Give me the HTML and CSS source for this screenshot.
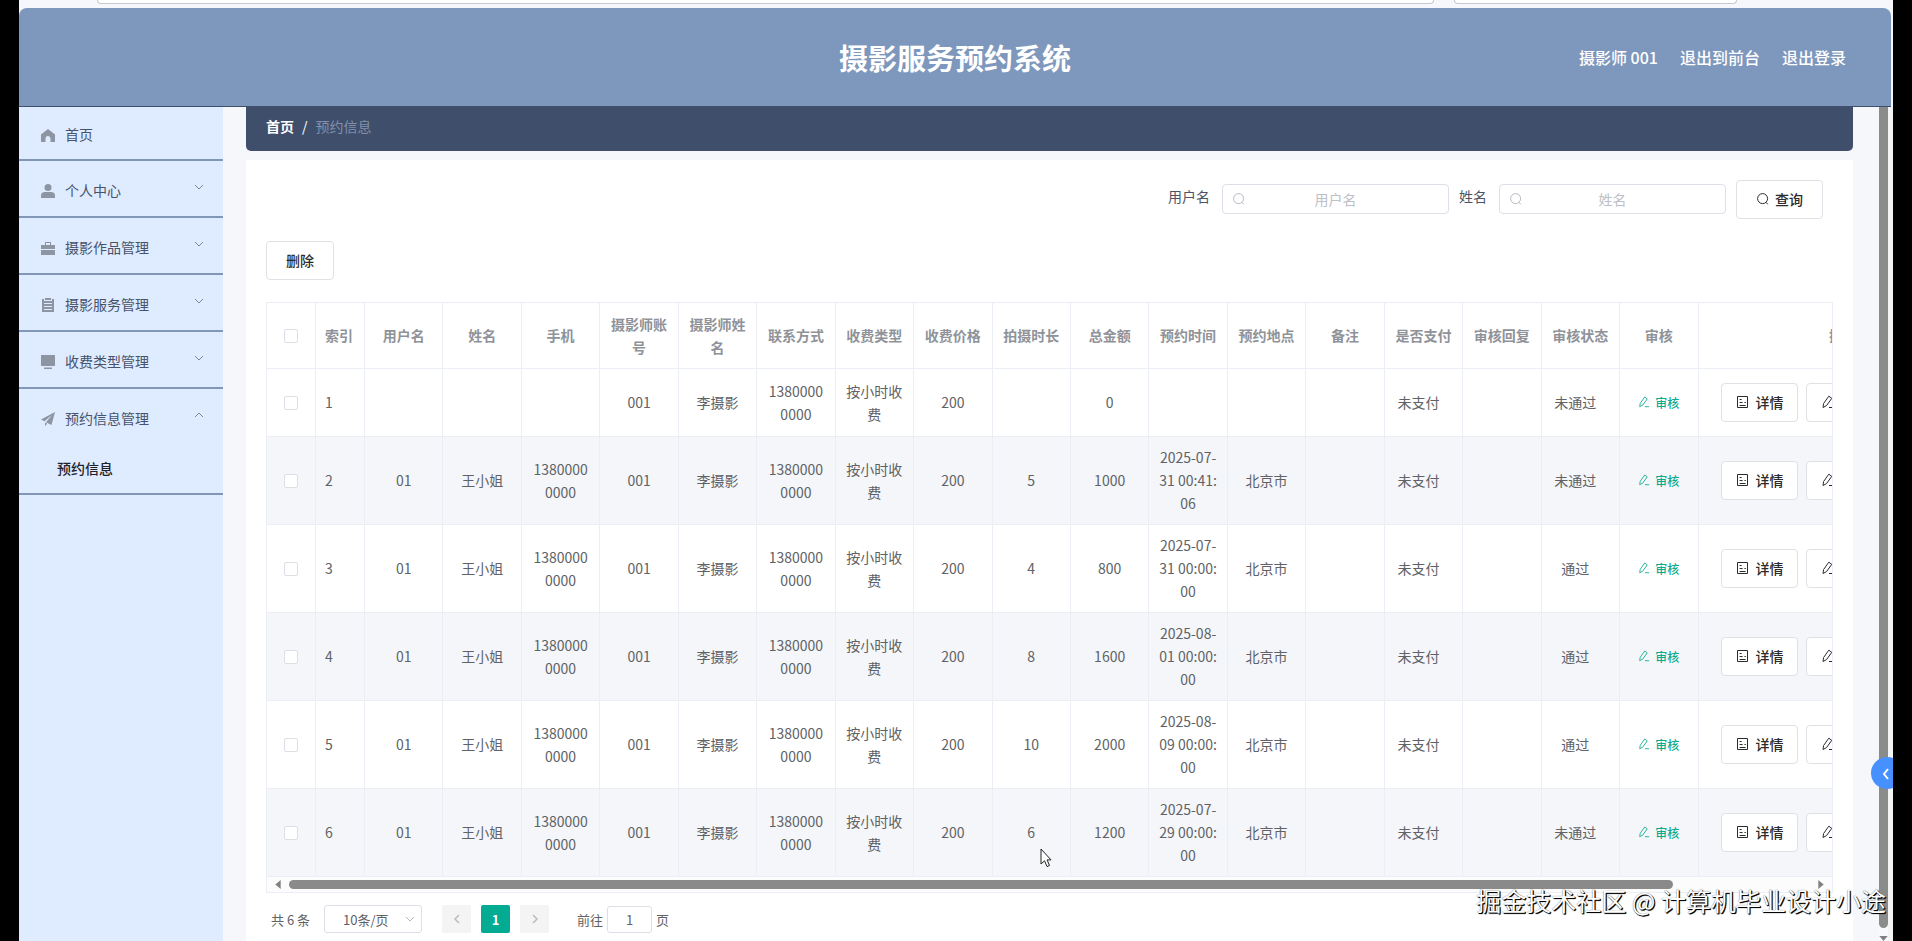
FILE: index.html
```html
<!DOCTYPE html>
<html lang="zh-CN">
<head>
  <meta charset="UTF-8" />
  <meta name="viewport" content="width=device-width, initial-scale=1.0"/>
  <title>摄影服务预约系统</title>
  <link rel="stylesheet" href="styles.css">
</head>
<body>
  <svg class="sprite" aria-hidden="true">
    <symbol id="i-search" viewBox="0 0 14 14"><circle cx="6.6" cy="6.6" r="5" fill="none" stroke="currentColor"/><path d="M10 10.3l1.8 2" fill="none" stroke="currentColor"/></symbol>
    <symbol id="i-down" viewBox="0 0 12 12"><path d="M2 4l4 4 4-4" fill="none" stroke="currentColor"/></symbol>
    <symbol id="i-up" viewBox="0 0 12 12"><path d="M2 8l4-4 4 4" fill="none" stroke="currentColor"/></symbol>
    <symbol id="i-left" viewBox="0 0 12 12"><path d="M8 2L4 6l4 4" fill="none" stroke="currentColor" stroke-width="1.5"/></symbol>
    <symbol id="i-right" viewBox="0 0 12 12"><path d="M4 2l4 4-4 4" fill="none" stroke="currentColor" stroke-width="1.5"/></symbol>
    <symbol id="i-doc" viewBox="0 0 14 14"><path d="M1.5 1.5h10v11h-10zM3.6 4.500h2M3.6 7.500h3M3.6 10.500h6M8.500 7.500h1.400" fill="none" stroke="currentColor"/></symbol>
    <symbol id="i-edit" viewBox="0 0 14 14"><path d="M2 12.500l.6-4L7.800 1.200l3 2.100-5.300 7.300zM8 12.500h5" fill="none" stroke="currentColor" stroke-linejoin="round"/></symbol>
  </svg>

  <div class="screen">
    <div class="browser-bar"><span class="pill pill-long"></span><span class="pill"></span></div>

    <header class="header">
      <h1>摄影服务预约系统</h1>
      <nav class="header-links">
        <a href="#">摄影师 001</a>
        <a href="#">退出到前台</a>
        <a href="#">退出登录</a>
      </nav>
    </header>

    <div class="body">
      <aside class="sidebar">
        <a class="menu-item first" href="#">
          <svg class="icon" viewBox="0 0 14 14"><path d="M7 1l7 5.500V14H9.500v-3.500a2.500 2.500 0 0 0-5 0V14H0V6.500z"/></svg>
          <span>首页</span>
        </a>
        <a class="menu-item" href="#">
          <svg class="icon" viewBox="0 0 14 14"><circle cx="7" cy="3.500" r="3.500"/><path d="M0 14v-2a4 4 0 0 1 4-4h6a4 4 0 0 1 4 4v2z"/></svg>
          <span>个人中心</span>
          <svg class="arrow"><use href="#i-down"/></svg>
        </a>
        <a class="menu-item" href="#">
          <svg class="icon" viewBox="0 0 14 14"><path d="M4 4V1h6v3h4v4H0V4zm1 0h4V2H5zM0 9h14v5H0z" fill-rule="evenodd"/></svg>
          <span>摄影作品管理</span>
          <svg class="arrow"><use href="#i-down"/></svg>
        </a>
        <a class="menu-item" href="#">
          <svg class="icon" viewBox="0 0 14 14"><path d="M1 1h2v2h8V1h2v13H1zM4 0h6v2H4zM3 5v1h8V5zm0 3v1h8V8zm0 3v1h8v-1z" fill-rule="evenodd"/></svg>
          <span>摄影服务管理</span>
          <svg class="arrow"><use href="#i-down"/></svg>
        </a>
        <a class="menu-item" href="#">
          <svg class="icon" viewBox="0 0 14 14"><path d="M0 0h14v11H0zM3 12.500h8V14H3z"/></svg>
          <span>收费类型管理</span>
          <svg class="arrow"><use href="#i-down"/></svg>
        </a>
        <div class="menu-group">
          <a class="menu-item" href="#">
            <svg class="icon" viewBox="0 0 14 14"><path d="M14 0L0 7.500l3.500 1.800L11 3 5 10.200l5.500 2.800zM4 10.500V14l2.200-2.300z"/></svg>
            <span>预约信息管理</span>
            <svg class="arrow"><use href="#i-up"/></svg>
          </a>
          <a class="sub-item" href="#">预约信息</a>
        </div>
      </aside>

      <main class="main">
        <nav class="breadcrumb">
          <a href="#">首页</a>
          <span class="slash">/</span>
          <span class="current">预约信息</span>
        </nav>

        <section class="card">
          <form class="search-form">
            <label for="username">用户名</label>
            <div class="search-box">
              <svg class="search-icon"><use href="#i-search"/></svg>
              <input type="text" id="username" placeholder="用户名" />
            </div>
            <label for="realname">姓名</label>
            <div class="search-box">
              <svg class="search-icon"><use href="#i-search"/></svg>
              <input type="text" id="realname" placeholder="姓名" />
            </div>
            <button type="button" class="btn"><svg class="btn-icon"><use href="#i-search"/></svg>查询</button>
          </form>

          <button type="button" class="btn btn-delete">删除</button>

          <div class="table-wrap">
            <table class="table">
              <colgroup>
                <col class="col-small"><col class="col-small">
                <col span="17">
                <col class="col-actions">
              </colgroup>
              <thead>
                <tr>
                  <th><input type="checkbox" aria-label="全选" /></th>
                  <th class="index">索引</th><th>用户名</th><th>姓名</th><th>手机</th>
                  <th>摄影师账号</th><th>摄影师姓名</th><th>联系方式</th><th>收费类型</th><th>收费价格</th>
                  <th>拍摄时长</th><th>总金额</th><th>预约时间</th><th>预约地点</th><th>备注</th>
                  <th>是否支付</th><th>审核回复</th><th>审核状态</th><th>审核</th><th>操作</th>
                </tr>
              </thead>
              <tbody>
                <tr>
                  <td><input type="checkbox" aria-label="1" /></td>
                  <td class="index">1</td><td></td><td></td><td></td>
                  <td>001</td><td>李摄影</td><td>13800000000</td><td>按小时收费</td><td>200</td>
                  <td></td><td>0</td><td></td><td></td><td></td>
                  <td class="state">未支付</td><td></td><td class="state">未通过</td>
                  <td><button type="button" class="btn-text"><svg><use href="#i-edit"/></svg>审核</button></td>
                  <td class="actions"><div class="action-row"><button type="button" class="btn"><svg class="btn-icon"><use href="#i-doc"/></svg>详情</button><button type="button" class="btn"><svg class="btn-icon"><use href="#i-edit"/></svg>修改</button></div></td>
                </tr>
                <tr>
                  <td><input type="checkbox" aria-label="2" /></td>
                  <td class="index">2</td><td>01</td><td>王小姐</td><td>13800000000</td>
                  <td>001</td><td>李摄影</td><td>13800000000</td><td>按小时收费</td><td>200</td>
                  <td>5</td><td>1000</td><td>2025-07-31 00:41:06</td><td>北京市</td><td></td>
                  <td class="state">未支付</td><td></td><td class="state">未通过</td>
                  <td><button type="button" class="btn-text"><svg><use href="#i-edit"/></svg>审核</button></td>
                  <td class="actions"><div class="action-row"><button type="button" class="btn"><svg class="btn-icon"><use href="#i-doc"/></svg>详情</button><button type="button" class="btn"><svg class="btn-icon"><use href="#i-edit"/></svg>修改</button></div></td>
                </tr>
                <tr>
                  <td><input type="checkbox" aria-label="3" /></td>
                  <td class="index">3</td><td>01</td><td>王小姐</td><td>13800000000</td>
                  <td>001</td><td>李摄影</td><td>13800000000</td><td>按小时收费</td><td>200</td>
                  <td>4</td><td>800</td><td>2025-07-31 00:00:00</td><td>北京市</td><td></td>
                  <td class="state">未支付</td><td></td><td class="state">通过</td>
                  <td><button type="button" class="btn-text"><svg><use href="#i-edit"/></svg>审核</button></td>
                  <td class="actions"><div class="action-row"><button type="button" class="btn"><svg class="btn-icon"><use href="#i-doc"/></svg>详情</button><button type="button" class="btn"><svg class="btn-icon"><use href="#i-edit"/></svg>修改</button></div></td>
                </tr>
                <tr>
                  <td><input type="checkbox" aria-label="4" /></td>
                  <td class="index">4</td><td>01</td><td>王小姐</td><td>13800000000</td>
                  <td>001</td><td>李摄影</td><td>13800000000</td><td>按小时收费</td><td>200</td>
                  <td>8</td><td>1600</td><td>2025-08-01 00:00:00</td><td>北京市</td><td></td>
                  <td class="state">未支付</td><td></td><td class="state">通过</td>
                  <td><button type="button" class="btn-text"><svg><use href="#i-edit"/></svg>审核</button></td>
                  <td class="actions"><div class="action-row"><button type="button" class="btn"><svg class="btn-icon"><use href="#i-doc"/></svg>详情</button><button type="button" class="btn"><svg class="btn-icon"><use href="#i-edit"/></svg>修改</button></div></td>
                </tr>
                <tr>
                  <td><input type="checkbox" aria-label="5" /></td>
                  <td class="index">5</td><td>01</td><td>王小姐</td><td>13800000000</td>
                  <td>001</td><td>李摄影</td><td>13800000000</td><td>按小时收费</td><td>200</td>
                  <td>10</td><td>2000</td><td>2025-08-09 00:00:00</td><td>北京市</td><td></td>
                  <td class="state">未支付</td><td></td><td class="state">通过</td>
                  <td><button type="button" class="btn-text"><svg><use href="#i-edit"/></svg>审核</button></td>
                  <td class="actions"><div class="action-row"><button type="button" class="btn"><svg class="btn-icon"><use href="#i-doc"/></svg>详情</button><button type="button" class="btn"><svg class="btn-icon"><use href="#i-edit"/></svg>修改</button></div></td>
                </tr>
                <tr>
                  <td><input type="checkbox" aria-label="6" /></td>
                  <td class="index">6</td><td>01</td><td>王小姐</td><td>13800000000</td>
                  <td>001</td><td>李摄影</td><td>13800000000</td><td>按小时收费</td><td>200</td>
                  <td>6</td><td>1200</td><td>2025-07-29 00:00:00</td><td>北京市</td><td></td>
                  <td class="state">未支付</td><td></td><td class="state">未通过</td>
                  <td><button type="button" class="btn-text"><svg><use href="#i-edit"/></svg>审核</button></td>
                  <td class="actions"><div class="action-row"><button type="button" class="btn"><svg class="btn-icon"><use href="#i-doc"/></svg>详情</button><button type="button" class="btn"><svg class="btn-icon"><use href="#i-edit"/></svg>修改</button></div></td>
                </tr>
              </tbody>
            </table>
            <div class="hscroll">
              <svg class="tri" viewBox="0 0 6 10"><path d="M6 0v10L0 5z"/></svg>
              <div class="htrack"><div class="hthumb"></div></div>
              <svg class="tri" viewBox="0 0 6 10"><path d="M0 0v10l6-5z"/></svg>
            </div>
          </div>

          <div class="pagination">
            <span>共 6 条</span>
            <div class="page-size">
              <select aria-label="每页条数"><option>10条/页</option></select>
              <svg class="select-arrow"><use href="#i-down"/></svg>
            </div>
            <div class="pager">
              <button type="button" aria-label="上一页" disabled><svg><use href="#i-left"/></svg></button>
              <button type="button" class="active">1</button>
              <button type="button" aria-label="下一页" disabled><svg><use href="#i-right"/></svg></button>
            </div>
            <label class="jump">前往<input type="text" value="1" />页</label>
          </div>
        </section>
      </main>

      <div class="vscroll">
        <div class="vthumb"></div>
        <svg viewBox="0 0 10 6"><path d="M0 0h10L5 6z"/></svg>
      </div>
    </div>

    <button type="button" class="drawer-btn" aria-label="展开"><svg viewBox="0 0 12 12"><path d="M8 1L4 6l4 5" fill="none" stroke="#fff" stroke-width="2"/></svg></button>
    <svg class="cursor" viewBox="0 0 12 20"><path d="M1 1v15l3.500-3.200L7 18.500l2.500-1-2.400-5.600H11z" fill="#fff" stroke="#222"/></svg>
    <div class="watermark">掘金技术社区 @ 计算机毕业设计小途</div>
  </div>
</body>
</html>
```
FILE: styles.css
```css
* {
  box-sizing: border-box;
}

body {
  margin: 0;
  padding: 0 19px;
  background: #000;
  color: #606266;
  font-family: "Noto Sans CJK SC", "Noto Sans", sans-serif;
  font-size: 14px;
}

a {
  color: inherit;
  text-decoration: none;
}

button, input, select {
  font-family: inherit;
  font-size: 14px;
}

.sprite {
  display: none;
}

.screen {
  position: relative;
  display: flex;
  flex-direction: column;
  min-height: 100vh;
  background: #f5f7fa;
  overflow: hidden;
}

.browser-bar {
  display: flex;
  gap: 20px;
  height: 8px;
  padding: 0 156px 0 78px;
  background: #f5f7fc;
}

.pill {
  flex: 4;
  height: 4px;
  background: #fff;
  border: 1px solid #c6c9cf;
  border-top: none;
  border-radius: 0 0 8px 8px;
}

.pill-long {
  flex: 19;
}

/* 顶部 */
.header {
  display: grid;
  grid-template-columns: 1fr auto 1fr;
  align-items: center;
  height: 99px;
  margin-right: 2px;
  padding: 0 45px;
  background: #7e97bc;
  border-bottom: 1px solid #3f506c;
  border-radius: 8px 8px 0 0;
  color: #fff;
}

.header h1 {
  grid-column: 2;
  margin: 0;
  font-size: 29px;
  line-height: 40px;
}

.header-links {
  display: flex;
  justify-content: flex-end;
  gap: 22px;
  font-size: 16px;
  font-weight: 500;
}

.body {
  flex: 1;
  display: flex;
}

/* 左侧菜单 */
.sidebar {
  flex: none;
  width: 204px;
  background: #dfebff;
  color: #46536b;
}

.menu-item {
  display: flex;
  align-items: center;
  gap: 10px;
  height: 57px;
  padding: 2px 18px 0 22px;
  border-bottom: 2px solid #8296b8;
}

.menu-item.first {
  height: 54px;
}

.icon {
  width: 14px;
  height: 14px;
  margin-top: 2px;
  fill: #8c95a1;
}

.arrow {
  width: 12px;
  height: 12px;
  margin: 0 0 6px auto;
  color: #7c8799;
}

.menu-group {
  height: 106px;
  border-bottom: 2px solid #8296b8;
}

.menu-group .menu-item {
  height: 55px;
  border-bottom: none;
}

.sub-item {
  display: block;
  padding-left: 38px;
  color: #1f2329;
  font-weight: 500;
  line-height: 48px;
}

/* 内容区 */
.main {
  flex: 1;
  min-width: 0;
  display: flex;
  flex-direction: column;
  gap: 9px;
  padding: 0 26px 0 23px;
}

.breadcrumb {
  display: flex;
  gap: 8px;
  height: 44px;
  padding: 0 20px;
  background: #3f4e6b;
  border-radius: 0 0 5px 5px;
  line-height: 39px;
  color: #fff;
}

.breadcrumb a {
  font-weight: bold;
}

.breadcrumb .current {
  color: #8290ab;
}

.card {
  flex: 1;
  padding: 20px 20px 0;
  background: #fff;
}

.search-form {
  display: flex;
  justify-content: flex-end;
  align-items: center;
  padding-right: 10px;
}

.search-form label {
  padding: 0 12px 8px 0;
  color: #4d5564;
}

.search-box {
  position: relative;
  width: 227px;
  margin: 0 10px 2px 0;
}

.search-box input {
  display: block;
  width: 100%;
  height: 30px;
  padding: 0 30px;
  border: 1px solid #dcdfe6;
  border-radius: 4px;
  text-align: center;
}

.search-box input::placeholder {
  color: #bcc0c8;
}

.search-icon {
  position: absolute;
  top: 8px;
  left: 10px;
  width: 14px;
  height: 14px;
  color: #b5b9c2;
}

.btn {
  display: inline-flex;
  align-items: center;
  gap: 5px;
  height: 39px;
  padding: 0 19px 1px;
  background: #fff;
  border: 1px solid #dfe1e6;
  border-radius: 4px;
  color: #2b2b2b;
  font-weight: 500;
  white-space: nowrap;
}

.btn-icon {
  width: 14px;
  height: 14px;
}

.btn-delete {
  margin: 22px 0;
}

/* 表格 */
.table-wrap {
  border: 1px solid #ebeef5;
  overflow: hidden;
}

.table {
  width: 110%;
  table-layout: fixed;
  border-collapse: separate;
  border-spacing: 0;
  line-height: 23px;
}

.col-small {
  width: 49px;
}

.col-actions {
  width: 290px;
}

.table th,
.table td {
  height: 68px;
  padding: 9px;
  border-right: 1px solid #ebeef5;
  border-bottom: 1px solid #ebeef5;
  text-align: center;
  word-break: break-all;
}

.table th {
  height: 66px;
  color: #8f9399;
}

.table tbody tr:nth-child(even) {
  background: #f4f6fa;
}

.table .index {
  text-align: left;
}

.table .state {
  padding-right: 19px;
}

.table .actions {
  padding: 0 22px;
}

.action-row {
  display: flex;
  gap: 8px;
}

.action-row .btn {
  gap: 6px;
  padding: 0 13px 1px 14px;
}

.table input[type="checkbox"] {
  display: block;
  appearance: none;
  width: 14px;
  height: 14px;
  margin: 0 auto;
  background: #fff;
  border: 1px solid #dcdfe6;
  border-radius: 2px;
}

.btn-text {
  display: inline-flex;
  align-items: center;
  gap: 5px;
  padding: 0;
  background: none;
  border: none;
  color: #0cab8f;
  font-size: 12px;
  font-weight: 500;
}

.btn-text svg {
  width: 12px;
  height: 12px;
}

.hscroll {
  display: flex;
  align-items: center;
  gap: 8px;
  height: 15px;
  padding: 0 8px;
  background: #fcfcfc;
}

.tri {
  width: 6px;
  height: 9px;
  fill: #808080;
}

.htrack {
  flex: 1;
}

.hthumb {
  width: 91%;
  height: 9px;
  background: #8a8a8a;
  border-radius: 5px;
}

/* 分页 */
.pagination {
  display: flex;
  align-items: center;
  padding: 12px 5px 8px;
  font-size: 13px;
}

.page-size {
  position: relative;
  margin: 0 20px 0 14px;
}

.page-size select {
  display: block;
  appearance: none;
  width: 98px;
  height: 28px;
  padding: 0 18px;
  background: #fff;
  border: 1px solid #dcdfe6;
  border-radius: 3px;
  color: #606266;
  font-size: 13px;
}

.select-arrow {
  position: absolute;
  top: 8px;
  right: 6px;
  width: 12px;
  height: 12px;
  color: #b4b8c0;
}

.pager {
  display: flex;
  gap: 10px;
}

.pager button {
  display: flex;
  justify-content: center;
  align-items: center;
  width: 29px;
  height: 28px;
  padding: 0;
  background: #f4f4f5;
  border: none;
  border-radius: 2px;
  color: #b9bcc3;
  font-size: 13px;
}

.pager button.active {
  background: #02ab91;
  color: #fff;
  font-weight: bold;
}

.pager svg {
  width: 12px;
  height: 12px;
}

.jump {
  display: flex;
  align-items: center;
  gap: 4px;
  margin-left: 28px;
}

.jump input {
  width: 45px;
  height: 27px;
  padding: 0;
  border: 1px solid #dcdfe6;
  border-radius: 3px;
  color: #606266;
  font-size: 13px;
  text-align: center;
}

/* 右侧滚动条 */
.vscroll {
  display: flex;
  flex-direction: column;
  gap: 8px;
  width: 14px;
  background: #f8f9fb;
  border-right: 5px solid #f3f4f6;
}

.vthumb {
  flex: 1;
  background: #8a8c8c;
  border-radius: 0 0 5px 5px;
}

.vscroll svg {
  width: 9px;
  height: 5px;
  fill: #808080;
}

/* 悬浮元素 */
.drawer-btn {
  position: absolute;
  top: 757px;
  right: -10px;
  width: 32px;
  height: 32px;
  padding: 2px 0 0 9px;
  background: #4790ff;
  border: none;
  border-radius: 50%;
  text-align: left;
}

.drawer-btn svg {
  width: 12px;
  height: 12px;
}

.cursor {
  position: absolute;
  top: 848px;
  left: 1021px;
  width: 12px;
  height: 20px;
}

.watermark {
  position: absolute;
  right: 7px;
  bottom: 23px;
  color: #fff;
  font-size: 25px;
  line-height: 36px;
  text-shadow: 1px 1px 1px #000, 1px 1px 0 #222, 0 0 1px #555;
}
```
